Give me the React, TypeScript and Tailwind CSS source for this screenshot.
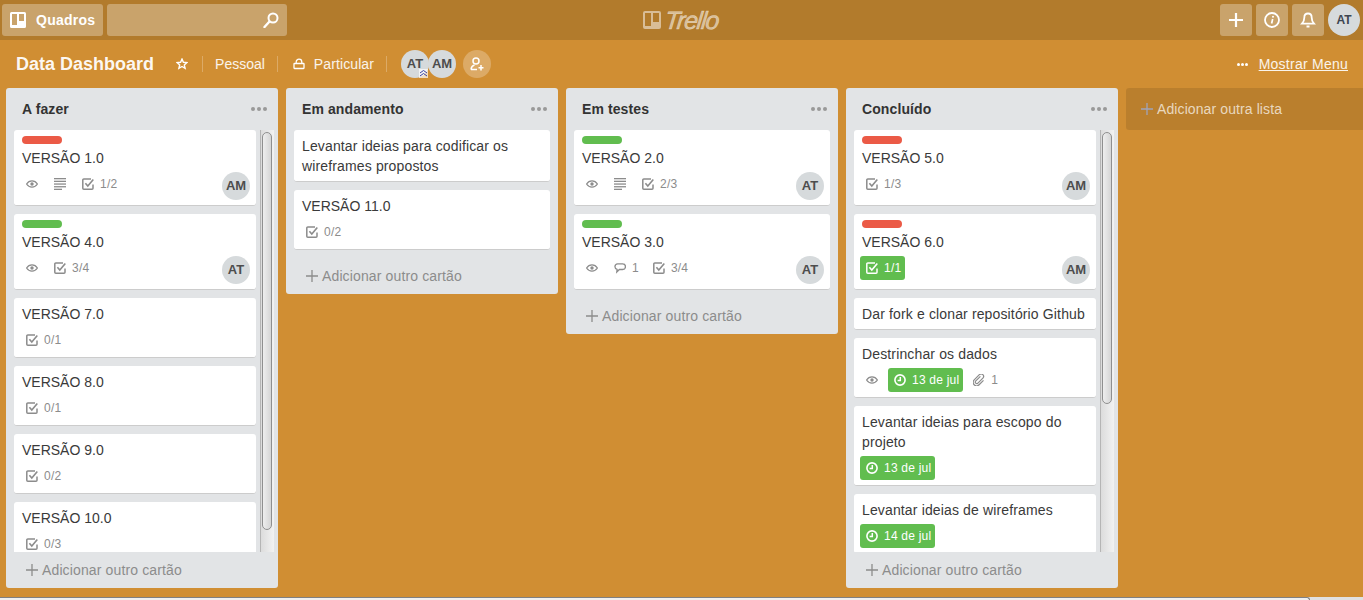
import React from "react";

type B = { k: string; t?: string; green?: boolean };
type C = { label?: "red" | "green"; title: string; badges?: B[]; who?: string };

const Eye = () => (
  <svg width="12" height="12" viewBox="0 0 12 12" fill="none" stroke="currentColor" strokeWidth="1.3">
    <path d="M.6 6C2 3.800 3.900 2.900 6 2.900S10 3.800 11.400 6C10 8.200 8.100 9.100 6 9.100S2 8.200.6 6Z" />
    <circle cx="6" cy="6" r="1.700" fill="currentColor" stroke="none" />
  </svg>
);
const Lines = () => (
  <svg width="12" height="12" viewBox="0 0 12 12" fill="currentColor">
    <rect x="0" y="0" width="12" height="1.300" />
    <rect x="0" y="2.700" width="12" height="1.300" />
    <rect x="0" y="5.400" width="12" height="1.300" />
    <rect x="0" y="8.100" width="12" height="1.300" />
    <rect x="0" y="10.700" width="8" height="1.300" />
  </svg>
);
const Check = () => (
  <svg width="12" height="12" viewBox="0 0 12 12" fill="none" stroke="currentColor">
    <path d="M11 6.500v3.700a1 1 0 0 1-1 1H1.800a1 1 0 0 1-1-1V2a1 1 0 0 1 1-1H9" strokeWidth="1.500" />
    <path d="M3.400 5.200l2.400 2.800L11.300 1.500" strokeWidth="1.600" />
  </svg>
);
const Clock = () => (
  <svg width="12" height="12" viewBox="0 0 12 12" fill="none" stroke="currentColor" strokeWidth="1.600">
    <circle cx="6" cy="6" r="5.100" />
    <path d="M6.300 2.900v3.500H3.600" strokeWidth="1.500" />
  </svg>
);
const Clip = () => (
  <svg width="12" height="12" viewBox="0 0 12 12" fill="none" stroke="currentColor" strokeWidth="1.200">
    <path d="M7.400 2.400 2.600 7.200a1.500 1.500 0 0 0 2.100 2.100l5.400-5.400a2.500 2.500 0 0 0-3.500-3.500L1.200 5.800a3.500 3.500 0 0 0 4.900 5l4.400-4.400" />
  </svg>
);
const Comment = () => (
  <svg width="12" height="12" viewBox="0 0 12 12" fill="none" stroke="currentColor" strokeWidth="1.300">
    <path d="M3.600 1.800h5a2.800 2.800 0 0 1 0 5.700H5.400L2.800 10l.3-2.600A2.850 2.850 0 0 1 3.600 1.800Z" />
  </svg>
);

const icons: Record<string, () => React.JSX.Element> = {
  eye: Eye,
  lines: Lines,
  check: Check,
  clock: Clock,
  clip: Clip,
  comment: Comment,
};

function Badge({ b }: { b: B }) {
  const I = icons[b.k];
  return (
    <div
      className={`mr-1 flex h-6 items-center gap-1.5 rounded-[3px] pl-1.5 text-xs tracking-[0.22px] ${b.t ? "pr-1" : "pr-1.5"} ${
        b.green ? "bg-[#61bd4f] text-white" : "text-[#8c8c8c]"
      }`}
    >
      <I />
      {b.t && <span>{b.t}</span>}
    </div>
  );
}

function Avatar({ s, cls }: { s: string; cls?: string }) {
  return (
    <div
      className={`flex items-center justify-center rounded-full bg-[#d6dadc] text-[13px] font-bold text-[#4d4d4d] ${
        cls ?? "h-7 w-7"
      }`}
    >
      {s}
    </div>
  );
}

function Card({ c }: { c: C }) {
  return (
    <div className="mb-2 shrink-0 rounded-[3px] border-b border-[#ccc] bg-white px-2 pt-1.5 pb-[5px]">
      {c.label && (
        <div className={`mb-1 h-2 w-10 rounded ${c.label === "red" ? "bg-[#eb5a46]" : "bg-[#61bd4f]"}`} />
      )}
      <div className={`text-sm leading-5 text-[#3a3a3a] ${c.title.startsWith("VERS") ? "" : "tracking-[0.14px]"}`}>
        {c.title}
      </div>
      {(c.badges || c.who) && (
        <div className="mt-1 flex items-start justify-between">
          <div className="-ml-0.5 flex">
            {c.badges?.map((b, i) => (
              <Badge key={i} b={b} />
            ))}
          </div>
          {c.who && <Avatar s={c.who} cls="h-7 w-7 -mr-0.5" />}
        </div>
      )}
    </div>
  );
}

function ScrollBar({ h }: { h: number }) {
  return (
    <div className="mr-1 w-3.5 shrink-0 border-l border-[#b5b5b5] bg-gradient-to-r from-[#dcdcdc] to-[#f2f2f2] pt-0.5">
      <div
        className="ml-px w-2.5 rounded-md border border-[#8f8f8f] bg-gradient-to-r from-[#eeeeee] to-[#d5d5d5]"
        style={{ height: h }}
      />
    </div>
  );
}

function AddCard() {
  return (
    <div className="flex h-9 shrink-0 items-center gap-1 pl-5 text-sm tracking-[0.13px] text-[#8c8c8c]">
      <svg width="12" height="12" viewBox="0 0 12 12" stroke="currentColor" strokeWidth="1.300">
        <path d="M6 0v12M0 6h12" />
      </svg>
      <span>Adicionar outro cartão</span>
    </div>
  );
}

function List({ title, cards, thumb }: { title: string; cards: C[]; thumb?: number }) {
  return (
    <div className={`flex w-[272px] shrink-0 flex-col rounded-[3px] bg-[#e2e4e6] ${thumb ? "h-[500px]" : ""}`}>
      <div className="flex h-[42px] shrink-0 items-center justify-between pr-[11px] pl-4">
        <span className="text-sm font-bold tracking-[0.1px] text-[#333]">{title}</span>
        <div className="flex gap-0.5">
          <i className="h-[4px] w-[4px] rounded-full bg-[#999]" />
          <i className="h-[4px] w-[4px] rounded-full bg-[#999]" />
          <i className="h-[4px] w-[4px] rounded-full bg-[#999]" />
        </div>
      </div>
      {thumb ? (
        <div className="flex min-h-0 flex-1">
          <div className="flex min-w-0 flex-1 flex-col overflow-hidden pr-1 pl-2">
            {cards.map((c, i) => (
              <Card key={i} c={c} />
            ))}
          </div>
          <ScrollBar h={thumb} />
        </div>
      ) : (
        <div className="flex flex-col px-2">
          {cards.map((c, i) => (
            <Card key={i} c={c} />
          ))}
        </div>
      )}
      <AddCard />
    </div>
  );
}

const eye: B = { k: "eye" };
const lines: B = { k: "lines" };
const ch = (t: string): B => ({ k: "check", t });

const l1: C[] = [
  { label: "red", title: "VERSÃO 1.0", badges: [eye, lines, ch("1/2")], who: "AM" },
  { label: "green", title: "VERSÃO 4.0", badges: [eye, ch("3/4")], who: "AT" },
  { title: "VERSÃO 7.0", badges: [ch("0/1")] },
  { title: "VERSÃO 8.0", badges: [ch("0/1")] },
  { title: "VERSÃO 9.0", badges: [ch("0/2")] },
  { title: "VERSÃO 10.0", badges: [ch("0/3")] },
];
const l2: C[] = [
  { title: "Levantar ideias para codificar os wireframes propostos" },
  { title: "VERSÃO 11.0", badges: [ch("0/2")] },
];
const l3: C[] = [
  { label: "green", title: "VERSÃO 2.0", badges: [eye, lines, ch("2/3")], who: "AT" },
  { label: "green", title: "VERSÃO 3.0", badges: [eye, { k: "comment", t: "1" }, ch("3/4")], who: "AT" },
];
const l4: C[] = [
  { label: "red", title: "VERSÃO 5.0", badges: [ch("1/3")], who: "AM" },
  { label: "red", title: "VERSÃO 6.0", badges: [{ k: "check", t: "1/1", green: true }], who: "AM" },
  { title: "Dar fork e clonar repositório Github" },
  {
    title: "Destrinchar os dados",
    badges: [eye, { k: "clock", t: "13 de jul", green: true }, { k: "clip", t: "1" }],
  },
  { title: "Levantar ideias para escopo do projeto", badges: [{ k: "clock", t: "13 de jul", green: true }] },
  { title: "Levantar ideias de wireframes", badges: [{ k: "clock", t: "14 de jul", green: true }] },
];

const Sep = () => <div className="mx-3 h-4 w-px bg-white/25" />;

function HeadBtn({ children }: { children: React.ReactNode }) {
  return (
    <div className="flex h-8 w-8 items-center justify-center rounded-[3px] bg-white/30 text-white">{children}</div>
  );
}

export default function App() {
  return (
    <div className="flex h-[600px] w-[1363px] flex-col overflow-hidden bg-[#d08e33] font-['Liberation_Sans',Arial,sans-serif]">
      <header className="relative flex h-10 shrink-0 items-center gap-1 bg-[#b27b2c] px-0.5">
        <div className="flex h-8 w-[101px] items-center gap-2.5 rounded-[3px] bg-white/30 pl-2 text-sm font-bold tracking-[0.25px] text-white">
          <svg width="16" height="16" viewBox="0 0 16 16" fill="currentColor">
            <path
              fillRule="evenodd"
              d="M1.500 0h13A1.500 1.500 0 0 1 16 1.500v13a1.500 1.500 0 0 1-1.500 1.500h-13A1.500 1.500 0 0 1 0 14.500v-13A1.500 1.500 0 0 1 1.500 0ZM2 2v11h5V2H2Zm7 0v7h5V2H9Z"
            />
          </svg>
          <span>Quadros</span>
        </div>
        <div className="flex h-8 w-[180px] items-center justify-end rounded-[3px] bg-white/30 pr-2 text-white">
          <svg width="16" height="16" viewBox="0 0 16 16" fill="none" stroke="currentColor" strokeWidth="2">
            <circle cx="10" cy="6" r="4.500" />
            <path d="M6.500 9.500 1.500 15" strokeWidth="2.400" strokeLinecap="round" />
          </svg>
        </div>
        <div className="absolute top-2 left-[643px] flex items-center gap-1 text-white/50">
          <svg width="18" height="18" viewBox="0 0 18 18" fill="currentColor">
            <path
              fillRule="evenodd"
              d="M2 0h14a2 2 0 0 1 2 2v14a2 2 0 0 1-2 2H2a2 2 0 0 1-2-2V2a2 2 0 0 1 2-2Zm0 2v13h6V2H2Zm8 0v9h6V2h-6Z"
            />
          </svg>
          <span className="inline-block -skew-x-6 text-[25px] leading-6 font-normal tracking-[-1.2px] italic [-webkit-text-stroke:0.5px_rgba(255,255,255,0.5)]">
            Trello
          </span>
        </div>
        <div className="ml-auto flex items-center gap-1 pr-[1px]">
          <HeadBtn>
            <svg width="16" height="16" viewBox="0 0 16 16" stroke="currentColor" strokeWidth="2.200">
              <path d="M8 1v14M1 8h14" />
            </svg>
          </HeadBtn>
          <HeadBtn>
            <svg width="16" height="16" viewBox="0 0 16 16" fill="none" stroke="currentColor" strokeWidth="1.800">
              <circle cx="8" cy="8" r="7" />
              <path d="M8.700 7 7.600 11.500" strokeWidth="1.700" />
              <circle cx="9" cy="4.700" r="1" fill="currentColor" stroke="none" />
            </svg>
          </HeadBtn>
          <HeadBtn>
            <svg width="16" height="16" viewBox="0 0 16 16" fill="none" stroke="currentColor" strokeWidth="1.800">
              <path d="M8 1.500c-2.500 0-3.700 2-3.700 4.200 0 3-1 4.500-2.300 6h12c-1.300-1.500-2.300-3-2.300-6 0-2.200-1.200-4.200-3.700-4.200Z" />
              <path d="M6.500 14.500h3" strokeWidth="2" />
            </svg>
          </HeadBtn>
          <div className="flex h-8 w-8 items-center justify-center rounded-full bg-[#d6dadc] text-xs font-bold text-[#3d4650]">
            AT
          </div>
        </div>
      </header>

      <div className="flex h-12 shrink-0 items-center pr-[15px] pl-4 text-sm text-white/90">
        <span className="text-lg font-bold text-white/95">Data Dashboard</span>
        <svg className="mr-[2px] ml-[22px]" width="12" height="12" viewBox="0 0 12 12" fill="none" stroke="white" strokeWidth="1.400">
          <path d="M6 1.100 7.400 4.300l3.500.3-2.600 2.300.8 3.500L6 8.500 2.900 10.400l.8-3.500L1.100 4.600l3.500-.3Z" />
        </svg>
        <Sep />
        <span>Pessoal</span>
        <Sep />
        <svg className="mr-[9px] ml-[3px]" width="12" height="12" viewBox="0 0 12 12" fill="none" stroke="white" strokeWidth="1.300">
          <rect x="1" y="5.500" width="10" height="5" rx="0.500" />
          <path d="M3.200 5.500V4a2.800 2.800 0 0 1 5.600 0v1.500" />
        </svg>
        <span className="tracking-[0.1px]">Particular</span>
        <Sep />
        <div className="relative ml-[2px] flex">
          <Avatar s="AT" />
          <Avatar s="AM" cls="h-7 w-7 -ml-px" />
          <svg className="absolute top-[19px] left-[18px]" width="9" height="9" viewBox="0 0 9 9" fill="none" stroke="#3b3f9e" strokeWidth="1">
            <rect width="9" height="9" fill="#fff" stroke="none" opacity="0.7" />
            <path d="M1 4 4.500 1.500 8 4M1 7 4.500 4.500 8 7" />
          </svg>
        </div>
        <div className="ml-[7px] flex h-7 w-7 items-center justify-center rounded-full bg-white/25">
          <svg width="16" height="16" viewBox="0 0 16 16" fill="none" stroke="white" strokeWidth="1.500">
            <circle cx="7" cy="5" r="3" />
            <path d="M2 13.500c.3-2.500 1.800-4 3.500-4.500M8 13.500H2" />
            <path d="M12 9v5.500M9.500 11.800h5" />
          </svg>
        </div>
        <div className="ml-auto flex items-center gap-[11px]">
          <div className="flex gap-px">
            <i className="h-[3px] w-[3px] rounded-full bg-white" />
            <i className="h-[3px] w-[3px] rounded-full bg-white" />
            <i className="h-[3px] w-[3px] rounded-full bg-white" />
          </div>
          <span className="tracking-[0.25px] underline">Mostrar Menu</span>
        </div>
      </div>

      <div className="flex min-h-0 flex-1 items-start gap-2 pl-1.5">
        <List title="A fazer" cards={l1} thumb={398} />
        <List title="Em andamento" cards={l2} />
        <List title="Em testes" cards={l3} />
        <List title="Concluído" cards={l4} thumb={272} />
        <div className="flex h-[42px] w-[272px] shrink-0 items-center gap-1 rounded-[3px] bg-black/10 pl-[15px] text-sm tracking-[0.1px] text-white/70">
          <svg width="12" height="12" viewBox="0 0 12 12" stroke="#a0a4b8" strokeWidth="1.300">
            <path d="M6 0v12M0 6h12" />
          </svg>
          <span>Adicionar outra lista</span>
        </div>
      </div>

      <div className="h-[3px] shrink-0 bg-[#e0e0e0]">
        <div className="h-[3px] w-[1310px] rounded-tr-sm border-t border-r border-[#808080] bg-[#f0f0f0]" />
      </div>
    </div>
  );
}
